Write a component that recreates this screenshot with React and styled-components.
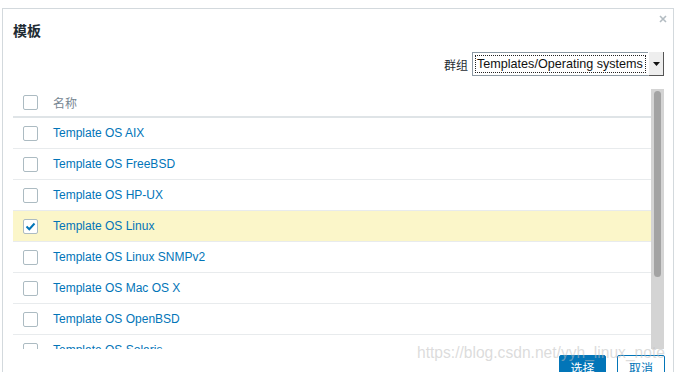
import React from 'react';
import styled, { createGlobalStyle } from 'styled-components';

const GlobalStyle = createGlobalStyle`
  body {
    margin: 0;
    background: #ffffff;
    font-family: "Liberation Sans", "Noto Sans CJK SC", Arial, sans-serif;
  }
`;

const templates = [
  { name: 'Template OS AIX' },
  { name: 'Template OS FreeBSD' },
  { name: 'Template OS HP-UX' },
  { name: 'Template OS Linux', checked: true },
  { name: 'Template OS Linux SNMPv2' },
  { name: 'Template OS Mac OS X' },
  { name: 'Template OS OpenBSD' },
  { name: 'Template OS Solaris' },
];

const Page = styled.div`
  position: relative;
  width: 679px;
  height: 372px;
  overflow: hidden;
  padding: 8px 0 0 2px;
  box-sizing: border-box;
  background: #ffffff;
`;

const Modal = styled.div`
  width: 672px;
  height: 400px;
  box-sizing: border-box;
  border: 1px solid #d3d9dd;
  display: flex;
  flex-direction: column;
  background: #fff;
`;

const Header = styled.div`
  height: 43px;
  display: flex;
  justify-content: space-between;
  align-items: flex-start;
  padding: 0 6px 0 10px;
`;

const Title = styled.h4`
  margin: 13px 0 0;
  font-size: 14px;
  line-height: 18px;
  font-weight: bold;
  color: #1f2c33;
`;

const Close = styled.button`
  margin-top: 6px;
  padding: 0;
  border: 0;
  background: none;
  width: 8px;
  height: 8px;
  display: flex;
`;

const Toolbar = styled.div`
  height: 24px;
  display: flex;
  justify-content: flex-end;
  align-items: center;
  padding-right: 9px;
  gap: 4px;
`;

const Label = styled.label`
  font-size: 12px;
  color: #1f2c33;
`;

const Select = styled.div`
  display: flex;
  height: 24px;
  box-sizing: border-box;
  border: 1px solid #8c9aa4;
  background: #fff;
`;

const SelectValue = styled.div`
  width: 171px;
  margin: 2px;
  box-sizing: border-box;
  outline: 1px dotted #222;
  outline-offset: -1px;
  padding: 0 2px;
  font-size: 12.6px;
  line-height: 18px;
  color: #111;
  white-space: nowrap;
  overflow: hidden;
`;

const SelectArrow = styled.div`
  width: 14px;
  display: flex;
  align-items: center;
  justify-content: center;
  background: #eeeeee;
  border-left: 1px solid #fff;
  border-right: 1px solid #555;
  border-bottom: 1px solid #555;
  margin: -1px -1px -1px 0;
`;

const Body = styled.div`
  margin-top: 13px;
  height: 260px;
  display: flex;
  padding-left: 10px;
`;

const Table = styled.div`
  flex: 1;
  overflow: hidden;
`;

const HeadRow = styled.div`
  height: 27px;
  display: flex;
  align-items: center;
  border-bottom: 2px solid #dfe4e7;
  padding-left: 10px;
  font-size: 12px;
  color: #768692;
`;

const Row = styled.div`
  height: 30px;
  display: flex;
  align-items: center;
  border-bottom: 1px solid #e8ebed;
  padding-left: 10px;
  background: ${(p) => (p.$selected ? '#fbf6c9' : '#fff')};
`;

const Check = styled.span`
  flex: none;
  width: 15px;
  height: 15px;
  box-sizing: border-box;
  border: 1px solid #acbbc2;
  border-radius: 2px;
  background: #fff;
  margin-right: 15px;
  display: flex;
  align-items: center;
  justify-content: center;
`;

const Link = styled.a`
  font-size: 12px;
  color: #0275b8;
  text-decoration: none;
`;

const Track = styled.div`
  width: 13px;
  margin-right: 9px;
  background: #d4d4d4;
  padding-top: 2px;
  box-sizing: border-box;
  display: flex;
  justify-content: center;
`;

const Thumb = styled.div`
  width: 7px;
  height: 186px;
  border-radius: 4px;
  background: #a3a3a3;
`;

const Footer = styled.div`
  display: flex;
  justify-content: flex-end;
  gap: 11px;
  padding: 6px 8px 0 0;
`;

const Button = styled.button`
  width: ${(p) => (p.$primary ? '47px' : '48px')};
  height: 25px;
  box-sizing: border-box;
  border: 1px solid #0275b8;
  border-radius: 2px;
  background: ${(p) => (p.$primary ? '#0275b8' : '#fff')};
  color: ${(p) => (p.$primary ? '#fff' : '#0275b8')};
  font-family: "Liberation Sans", "Noto Sans CJK SC", sans-serif;
  font-size: 12px;
  padding: 0;
`;

const Watermark = styled.div`
  position: absolute;
  left: 417px;
  top: 344px;
  font-size: 15.6px;
  color: rgba(190, 190, 190, 0.55);
  white-space: nowrap;
  pointer-events: none;
`;

const Tick = () => (
  <svg width="11" height="9" viewBox="0 0 11 9">
    <path d="M1.5 4.5 L4.3 7.2 L9.5 1.5" fill="none" stroke="#0275b8" strokeWidth="2" />
  </svg>
);

const App = () => {
  return (
    <Page>
      <GlobalStyle />
      <Modal>
        <Header>
          <Title>模板</Title>
          <Close aria-label="close">
            <svg width="8" height="8" viewBox="0 0 8 8">
              <path d="M1 1 L7 7 M7 1 L1 7" stroke="#b3bcc2" strokeWidth="1.6" />
            </svg>
          </Close>
        </Header>
        <Toolbar>
          <Label>群组</Label>
          <Select>
            <SelectValue>Templates/Operating systems</SelectValue>
            <SelectArrow>
              <svg width="7" height="4" viewBox="0 0 7 4">
                <path d="M0 0 H7 L3.5 4 Z" fill="#111" />
              </svg>
            </SelectArrow>
          </Select>
        </Toolbar>
        <Body>
          <Table>
            <HeadRow>
              <Check />
              名称
            </HeadRow>
            {templates.map((t) => (
              <Row key={t.name} $selected={t.checked}>
                <Check>{t.checked && <Tick />}</Check>
                <Link>{t.name}</Link>
              </Row>
            ))}
          </Table>
          <Track>
            <Thumb />
          </Track>
        </Body>
        <Footer>
          <Button $primary>选择</Button>
          <Button>取消</Button>
        </Footer>
      </Modal>
      <Watermark>https://blog.csdn.net/yyh_linux_note</Watermark>
    </Page>
  );
};

export default App;
